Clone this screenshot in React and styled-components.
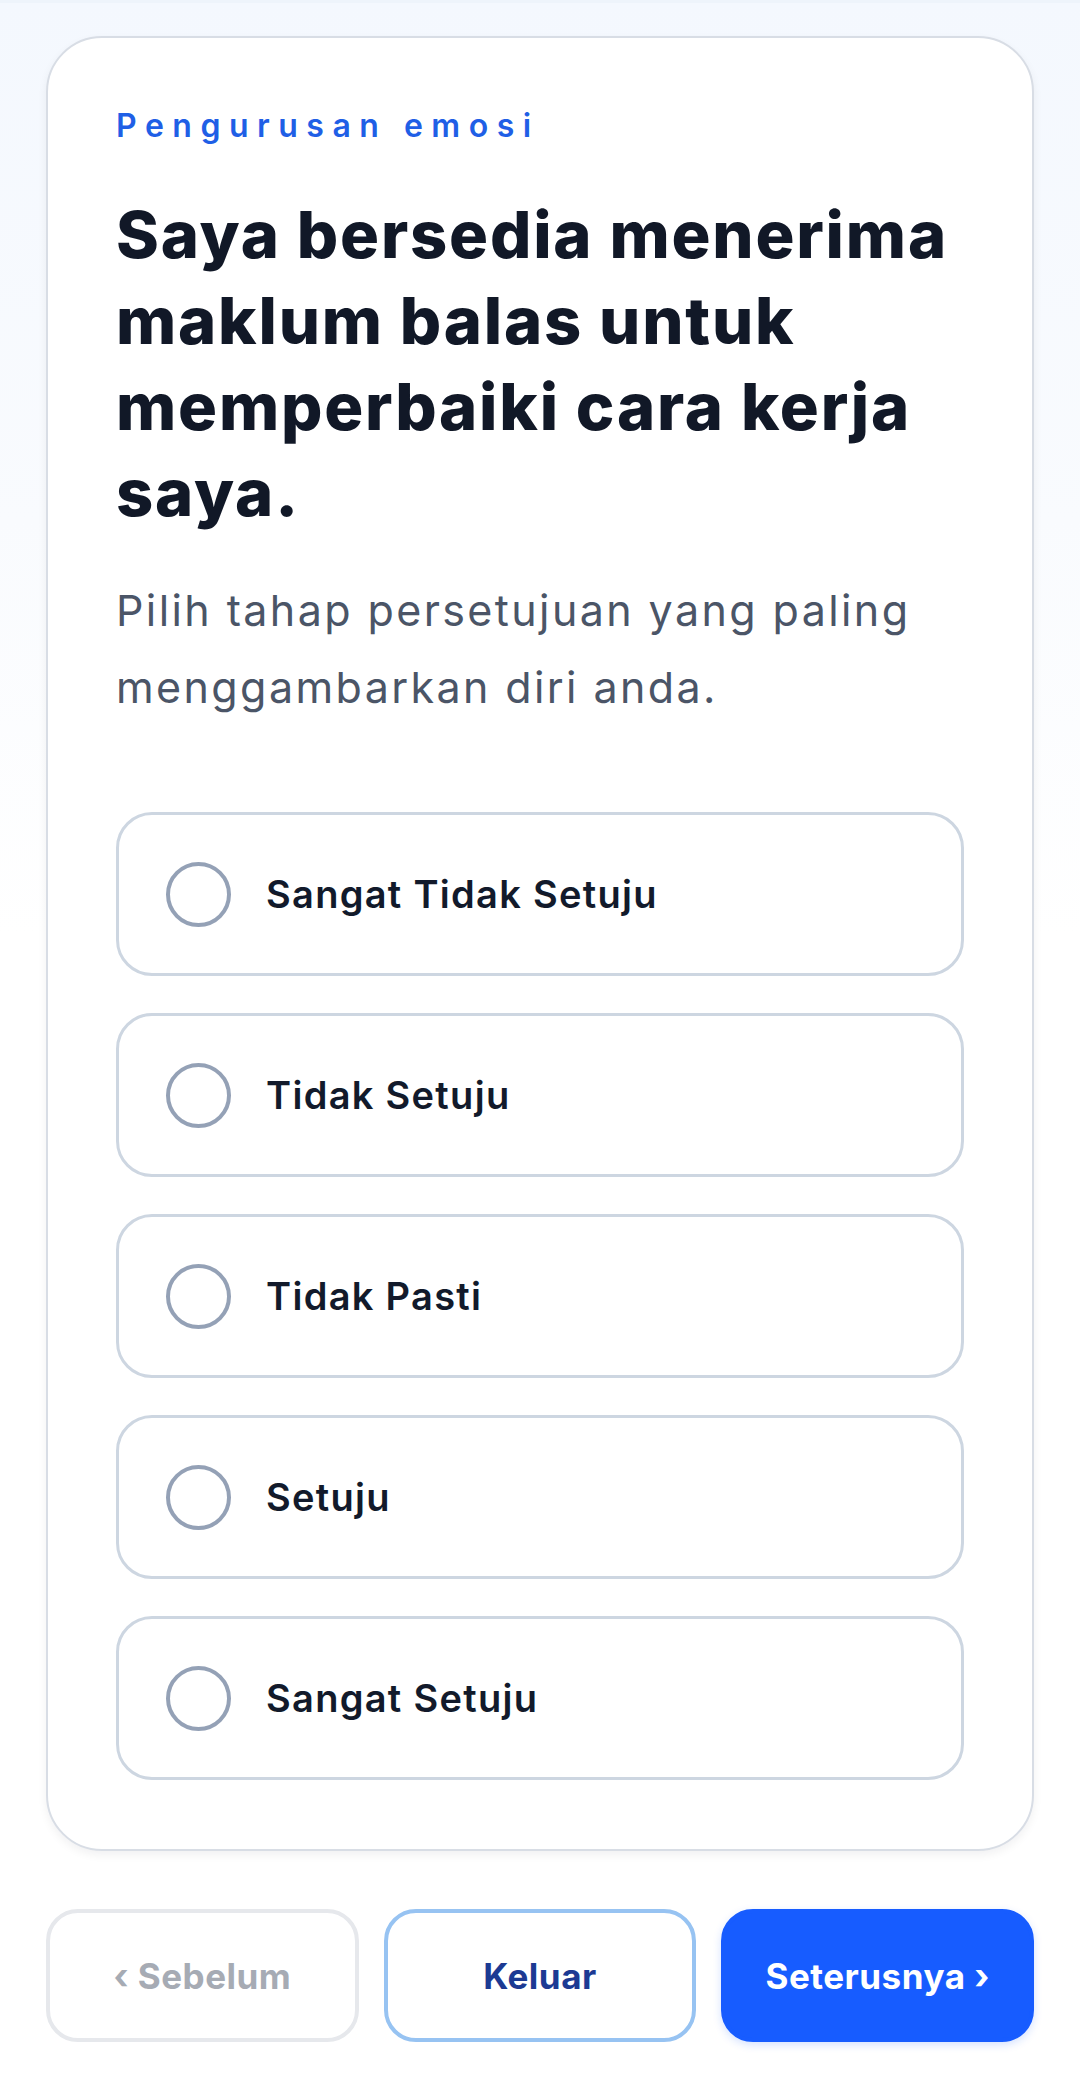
import styled, { createGlobalStyle } from 'styled-components'

const GlobalStyle = createGlobalStyle`
  html, body {
    margin: 0;
    padding: 0;
  }

  body {
    font-family: Inter, "Noto Sans", "Liberation Sans", sans-serif;
    background: #ffffff;
  }
`

const options = [
  'Sangat Tidak Setuju',
  'Tidak Setuju',
  'Tidak Pasti',
  'Setuju',
  'Sangat Setuju'
]

const Page = styled.div`
  box-sizing: border-box;
  min-height: 2075px;
  padding: 33px 46px 32px;
  background: linear-gradient(180deg, #f4f8fe 0%, #f9fbfe 25%, #ffffff 45%);
  border-top: 3px solid #eef4fb;
`

const Card = styled.section`
  box-sizing: border-box;
  background: #ffffff;
  border: 2px solid #d8dde5;
  border-radius: 56px;
  padding: 70px 68px 69px;
  box-shadow: 0 4px 10px rgba(15, 23, 42, 0.06);
`

const Category = styled.p`
  margin: 0;
  font-size: 32px;
  line-height: 36px;
  font-weight: 600;
  letter-spacing: 8.5px;
  color: #1f5fe6;
`

const Question = styled.h1`
  margin: 48px 0 0;
  font-size: 65px;
  line-height: 86px;
  font-weight: 800;
  letter-spacing: 1.8px;
  color: #111827;
`

const Hint = styled.p`
  margin: 36px 0 0;
  font-size: 43px;
  line-height: 77px;
  font-weight: 400;
  letter-spacing: 2.4px;
  color: #4b5567;
`

const OptionList = styled.div`
  display: flex;
  flex-direction: column;
  gap: 37px;
  margin-top: 86px;
`

const Option = styled.button`
  box-sizing: border-box;
  display: flex;
  align-items: center;
  gap: 35px;
  width: 100%;
  height: 164px;
  padding: 0 0 0 47px;
  background: #ffffff;
  border: 3px solid #cdd6e1;
  border-radius: 36px;
  cursor: pointer;
  font-family: inherit;
  text-align: left;
`

const Radio = styled.span`
  box-sizing: border-box;
  flex: 0 0 auto;
  width: 65px;
  height: 65px;
  border-radius: 50%;
  border: 4px solid #94a1b6;
`

const OptionText = styled.span`
  font-size: 38px;
  font-weight: 600;
  letter-spacing: 1.3px;
  color: #121a2b;
`

const Actions = styled.div`
  display: grid;
  grid-template-columns: repeat(3, 1fr);
  gap: 25px;
  margin-top: 58px;
`

const ActionButton = styled.button`
  box-sizing: border-box;
  height: 133px;
  border-radius: 32px;
  font-family: inherit;
  font-size: 35px;
  font-weight: 700;
  letter-spacing: 0.5px;
  cursor: pointer;
  background: ${({ $variant }) => ($variant === 'primary' ? '#175cff' : '#ffffff')};
  color: ${({ $variant }) =>
    $variant === 'primary' ? '#ffffff' : $variant === 'ghost' ? '#a6abb4' : '#1c3a93'};
  border: 4px solid
    ${({ $variant }) =>
      $variant === 'primary' ? '#175cff' : $variant === 'ghost' ? '#e6e8ec' : '#97c3f2'};
  box-shadow: ${({ $variant }) =>
    $variant === 'primary' ? '0 3px 8px rgba(23, 92, 255, 0.18)' : 'none'};
`

const App = () => {
  return (
    <Page>
      <GlobalStyle />
      <Card>
        <Category>Pengurusan emosi</Category>
        <Question>Saya bersedia menerima maklum balas untuk memperbaiki cara kerja saya.</Question>
        <Hint>Pilih tahap persetujuan yang paling menggambarkan diri anda.</Hint>

        <OptionList>
          {options.map(label => (
            <Option key={label} type="button">
              <Radio />
              <OptionText>{label}</OptionText>
            </Option>
          ))}
        </OptionList>
      </Card>

      <Actions>
        <ActionButton type="button" $variant="ghost">‹ Sebelum</ActionButton>
        <ActionButton type="button" $variant="outline">Keluar</ActionButton>
        <ActionButton type="button" $variant="primary">Seterusnya ›</ActionButton>
      </Actions>
    </Page>
  )
}

export default App
